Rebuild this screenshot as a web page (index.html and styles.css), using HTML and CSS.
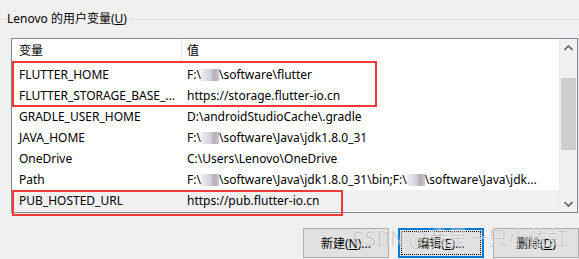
FILE: index.html
```html
<!DOCTYPE html>
<html>
<head>
<meta charset="utf-8">
<link rel="stylesheet" href="styles.css">
</head>
<body>
<div class="dialog">
  <div class="legend">
    <div class="line short"></div>
    <span class="legend-text">Lenovo 的用户变量(<u>U</u>)</span>
    <div class="line grow"></div>
  </div>
  <div class="list">
    <div class="content">
      <div class="header">
        <div class="hcell name">变量</div>
        <div class="hcell value">值</div>
      </div>
      <div class="row"><div class="cell name">FLUTTER_HOME</div><div class="cell value">F:\<span class="blur"></span>\software\flutter</div></div>
      <div class="row"><div class="cell name">FLUTTER_STORAGE_BASE_...</div><div class="cell value">https://storage.flutter-io.cn</div></div>
      <div class="row"><div class="cell name">GRADLE_USER_HOME</div><div class="cell value">D:\androidStudioCache\.gradle</div></div>
      <div class="row"><div class="cell name">JAVA_HOME</div><div class="cell value">F:\<span class="blur"></span>\software\Java\jdk1.8.0_31</div></div>
      <div class="row"><div class="cell name">OneDrive</div><div class="cell value">C:\Users\Lenovo\OneDrive</div></div>
      <div class="row"><div class="cell name">Path</div><div class="cell value">F:\<span class="blur"></span>\software\Java\jdk1.8.0_31\bin;F:\<span class="blur"></span>\software\Java\jdk...</div></div>
      <div class="row selected"><div class="cell name">PUB_HOSTED_URL</div><div class="cell value">https://pub.flutter-io.cn</div></div>
    </div>
    <div class="scrollbar">
      <div class="arrow up"><svg width="9" height="6" viewBox="0 0 9 6"><path d="M0.5 5 L4.5 1 L8.5 5" fill="none" stroke="#606060" stroke-width="1.6"/></svg></div>
      <div class="track"><div class="thumb"></div></div>
      <div class="arrow down"><svg width="9" height="6" viewBox="0 0 9 6"><path d="M0.5 1 L4.5 5 L8.5 1" fill="none" stroke="#606060" stroke-width="1.6"/></svg></div>
    </div>
    <div class="mark mark1"></div>
    <div class="mark mark2"></div>
  </div>
  <div class="buttons">
    <button class="btn">新建(<u>N</u>)...</button>
    <button class="btn focused">编辑(<u>E</u>)...</button>
    <button class="btn">删除(<u>D</u>)</button>
  </div>
  <div class="watermark">CSDN @我是一只小依虹</div>
</div>
</body>
</html>
```

FILE: styles.css
```css
html, body {
  margin: 0;
  padding: 0;
  background: #f0f0f0;
}
body {
  width: 579px;
  height: 259px;
  overflow: hidden;
  font-family: "Noto Sans", "Noto Sans CJK SC", sans-serif;
  font-size: 12px;
  color: #000;
}
.dialog {
  position: relative;
  width: 579px;
  height: 259px;
}
.legend {
  display: flex;
  align-items: center;
  height: 20px;
  padding-top: 9px;
  padding-bottom: 9px;
}
.line {
  height: 1px;
  background: #dcdcdc;
}
.line.short { width: 6px; }
.line.grow { flex: 1; }
.legend-text {
  padding: 0 4px 0 1px;
  line-height: 20px;
  white-space: nowrap;
}
.list {
  position: relative;
  display: flex;
  margin-left: 11px;
  width: 565px;
  height: 173px;
  border: 1px solid #828790;
  background: #fff;
}
.content {
  width: 547px;
  border-right: 1px solid #ececec;
}
.header {
  display: flex;
  height: 25px;
}
.hcell {
  display: flex;
  align-items: center;
  height: 19px;
  padding-top: 1px;
}
.hcell.name {
  width: 162px;
  padding-left: 7px;
  border-right: 1px solid #e5e5e5;
}
.hcell.value {
  padding-left: 5px;
}
.row {
  display: flex;
  height: 21px;
  align-items: center;
  white-space: nowrap;
}
.row.selected {
  background: #f0f0f0;
}
.cell.name {
  width: 163px;
  padding-left: 7px;
}
.cell.value {
  padding-left: 5px;
  overflow: hidden;
}
.blur {
  display: inline-block;
  width: 18px;
  height: 12px;
  vertical-align: -2px;
  background: linear-gradient(90deg, #ececf0 0%, #d8d6dc 45%, #b4aebb 75%, #cdc9d2 100%);
}
.scrollbar {
  width: 17px;
  background: #f0f0f0;
  display: flex;
  flex-direction: column;
}
.arrow {
  height: 17px;
  display: flex;
  align-items: center;
  justify-content: center;
}
.track {
  flex: 1;
  padding-top: 22px;
}
.thumb {
  margin: 0 1px;
  height: 72px;
  background: #cdcdcd;
}
.mark {
  position: absolute;
  border: 2.5px solid #f03a3a;
  box-sizing: border-box;
}
.mark1 {
  left: 0;
  top: 22px;
  width: 365px;
  height: 46px;
}
.mark2 {
  left: 0;
  top: 151px;
  width: 331px;
  height: 26px;
}
.buttons {
  display: flex;
  gap: 9px;
  margin-top: 15px;
  padding-left: 303px;
}
.btn {
  position: relative;
  width: 86px;
  height: 30px;
  background: #e1e1e1;
  border: 1px solid #adadad;
  font-family: "Noto Sans", "Noto Sans CJK SC", sans-serif;
  font-size: 12px;
  color: #000;
  padding: 0;
}
.btn.focused {
  border: 2px solid #0078d7;
}
.btn.focused::after {
  content: "";
  position: absolute;
  left: 1px;
  top: 1px;
  right: 1px;
  bottom: 1px;
  border: 1px dotted #000;
}
.watermark {
  position: absolute;
  left: 352px;
  top: 225px;
  font-family: "Noto Sans CJK SC", sans-serif;
  font-size: 20px;
  line-height: 26px;
  color: rgba(150, 150, 155, 0.55);
  -webkit-text-stroke: 0.5px rgba(255, 255, 255, 0.8);
  white-space: nowrap;
  pointer-events: none;
}
```
